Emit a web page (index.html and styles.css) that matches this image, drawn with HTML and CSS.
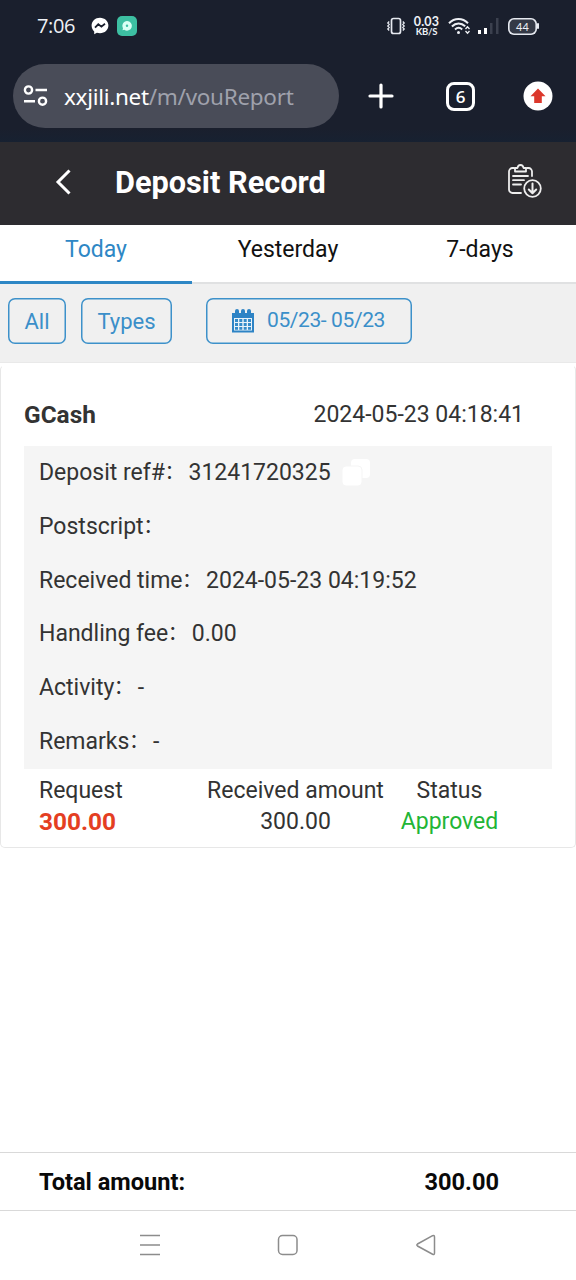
FILE: index.html
```html
<!DOCTYPE html>
<html lang="en">
<head>
<meta charset="utf-8">
<meta name="viewport" content="width=device-width, initial-scale=1">
<title>Deposit Record</title>
<link rel="stylesheet" href="styles.css">
</head>
<body>
<div class="screen">
  <div class="status-bar">
    <span class="clock">7:06</span>
    <svg class="messenger" width="18" height="18" viewBox="0 0 18 18"><path d="M9 .7C4.2.7.6 4.100.6 8.600c0 2.400 1 4.400 2.600 5.800v2.900l2.700-1.500c1 .3 2 .5 3.100.5 4.800 0 8.400-3.400 8.400-7.700S13.800.7 9 .7z" fill="#fff"/><path d="M4 10.700 7.300 7.300l3.100 2.400L14 6.700" fill="none" stroke="#1a1f2d" stroke-width="1.800"/></svg>
    <svg class="chat-app" width="20" height="20" viewBox="0 0 20 20"><rect width="20" height="20" rx="5" fill="#3dbfa2"/><path d="M10 5a4.800 4.800 0 1 1-2.700 8.700l-1.800.5.500-2A4.800 4.800 0 0 1 10 5z" fill="#d9fff5"/><circle cx="10" cy="9.800" r="1.200" fill="#3dbfa2"/></svg>
    <div class="status-icons">
      <svg width="20" height="18" viewBox="0 0 20 18" fill="none" stroke="#e6e9f0"><rect x="5.500" y="1.500" width="9" height="15" rx="2" stroke-width="1.700"/><path d="M3.200 4.500 1.800 6l1.400 1.500L1.800 9l1.400 1.500-1.400 1.500 1.400 1.500M16.800 4.500 18.200 6l-1.400 1.500L18.200 9l-1.400 1.500 1.400 1.500-1.400 1.500" stroke-width="1.300"/></svg>
      <div class="speed"><span class="speed-value">0.03</span><span class="speed-unit">KB/S</span></div>
      <svg class="wifi" width="23" height="18" viewBox="0 0 23 18" fill="none" stroke="#eef0f5" stroke-width="2"><path d="M1 6.200c5.600-5.600 13.400-5.600 19 0M3.900 9.500c4-4 9.300-4 13.300-.2M7 12.500c2.200-2.100 5-2.100 7.200 0"/><circle cx="10.500" cy="15.600" r="1.500" fill="#eef0f5" stroke="none"/><path d="m17.500 12 2-2.300 2 2.300M17.500 14l2 2.300 2-2.300" stroke-width="1.300"/></svg>
      <svg class="signal" width="22" height="18" viewBox="0 0 22 18"><path d="M1 13h3v4H1zM7 11h3v6H7z" fill="#fff"/><path d="M13 6h2.500v11H13zM19 1h2.500v16H19z" fill="#3b404e"/></svg>
      <div class="battery">44</div>
    </div>
  </div>

  <div class="browser-bar">
    <div class="address">
      <svg width="25" height="22" viewBox="0 0 25 22" fill="none" stroke="#fff" stroke-width="2.400"><circle cx="5.500" cy="5" r="3.600"/><path d="M12.500 5H24M1 16.200h11"/><circle cx="19.500" cy="16.200" r="3.600"/></svg>
      <span class="url">xxjili.net<span class="path">/m/vouReport</span></span>
    </div>
    <svg class="new-tab" width="26" height="26" viewBox="0 0 26 26" stroke="#fff" stroke-width="3.200" stroke-linecap="round"><path d="M13 2v22M2 13h22"/></svg>
    <div class="tab-count">6</div>
    <svg class="update" width="30" height="30" viewBox="0 0 30 30"><circle cx="15" cy="15" r="14.500" fill="#fff"/><path d="m15 7.500 7.500 7.800h-3.700V22h-7.600v-6.700H7.500z" fill="#dc382c"/></svg>
  </div>

  <header class="page-header">
    <svg class="back" width="18" height="28" viewBox="0 0 18 28" fill="none" stroke="#fff" stroke-width="3"><path d="M16.500 2.500 5 14l11.500 11.500"/></svg>
    <h1>Deposit Record</h1>
    <svg class="records" width="36" height="36" viewBox="0 0 36 36" fill="none" stroke="#eee" stroke-width="1.800" stroke-linecap="round" stroke-linejoin="round"><path d="M7 4H5.500A3.500 3.500 0 0 0 2 7.500v18A3.500 3.500 0 0 0 5.500 29H14M20 4h1.500A3.500 3.500 0 0 1 25 7.500V12M8 7.500V4h2.500c.5-4 5.500-4 6 0H19v3.500zM6 12h15M6 16.200h11M6 20.500h8"/><circle cx="25.500" cy="24.500" r="8.300"/><path d="M25.500 19.500v9.500M21.800 25.500l3.700 3.700 3.700-3.700" stroke-width="2"/></svg>
  </header>

  <nav class="tabs">
    <div class="tab active">Today</div>
    <div class="tab">Yesterday</div>
    <div class="tab">7-days</div>
  </nav>

  <div class="filters">
    <div class="chip all">All</div>
    <div class="chip types">Types</div>
    <div class="chip dates">
      <svg width="22" height="24" viewBox="0 0 22 24"><path d="M0 4h3V2a2 2 0 0 1 4 0v2h2V2a2 2 0 0 1 4 0v2h2V2a2 2 0 0 1 4 0v2h3v19.500H0z" fill="#2d83c5"/><path d="M2 9h18v12.500H2z" fill="#e8f2f9"/><path d="M3 10h3v3H3zm4.300 0h3v3h-3zm4.400 0h3v3h-3zm4.300 0h3v3h-3zM3 14h3v3H3zm4.300 0h3v3h-3zm4.400 0h3v3h-3zm4.300 0h3v3h-3zM3 18h3v2.700H3zm4.300 0h3v2.700h-3zm4.400 0h3v2.700h-3zm4.300 0h3v2.700h-3z" fill="#348bc9"/></svg>
      <span>05/23- 05/23</span>
    </div>
  </div>

  <main class="content">
    <article class="card">
      <div class="card-head"><strong>GCash</strong><time>2024-05-23 04:18:41</time></div>
      <div class="details">
        <div class="row"><span>Deposit ref#</span><span class="colon">：</span><span>31241720325</span><svg class="copy" width="30" height="30" viewBox="0 0 30 30" fill="#fff"><rect x="10" y="1" width="19" height="19" rx="4"/><rect x="1" y="8" width="20" height="20" rx="4" stroke="#f5f5f5"/></svg></div>
        <div class="row"><span>Postscript</span><span class="colon">：</span></div>
        <div class="row"><span>Received time</span><span class="colon">：</span><span>2024-05-23 04:19:52</span></div>
        <div class="row"><span>Handling fee</span><span class="colon">：</span><span>0.00</span></div>
        <div class="row"><span>Activity</span><span class="colon">：</span><span>-</span></div>
        <div class="row"><span>Remarks</span><span class="colon">：</span><span>-</span></div>
      </div>
      <div class="summary">
        <div class="request"><span>Request</span><b>300.00</b></div>
        <div class="received"><span>Received amount</span><span>300.00</span></div>
        <div class="state"><span>Status</span><span class="approved">Approved</span></div>
      </div>
    </article>
  </main>

  <footer class="total"><span>Total amount:</span><span>300.00</span></footer>

  <div class="system-nav">
    <svg width="22" height="22" viewBox="0 0 22 22"><path d="M1 1.500h20M1 11h20M1 20.500h20"/></svg>
    <svg width="22" height="22" viewBox="0 0 22 22"><rect x="1.500" y="1.500" width="18.500" height="19" rx="4"/></svg>
    <svg width="22" height="22" viewBox="0 0 22 22"><path d="M17.600 1.700 2.500 10q-1.300 1 0 2l15.100 8.200q1.900.8 1.900-1.200V3q0-2-1.900-1.300z"/></svg>
  </div>
</div>
</body>
</html>
```
FILE: styles.css
```css
* { box-sizing: border-box; }

body {
  margin: 0;
  background: #fff;
  color: #333;
  font-family: Roboto, "Noto Sans CJK SC", sans-serif;
  font-size: 23px;
}

svg { display: block; flex: none; }

.screen {
  width: 576px;
  height: 1280px;
  display: flex;
  flex-direction: column;
  overflow: hidden;
}

.screen > * { flex: none; }

.status-bar {
  height: 52px;
  padding-left: 37px;
  display: flex;
  align-items: center;
  background: #1a1f2d;
  color: #eef1f6;
}

.clock {
  width: 54px;
  font: 20px/24px "Open Sans", sans-serif;
  letter-spacing: -0.4px;
}

.chat-app { margin-left: 8px; }

.status-icons {
  margin-left: auto;
  padding-right: 37px;
  display: flex;
  align-items: center;
}

.speed {
  width: 27px;
  margin-left: 7px;
  display: flex;
  flex-direction: column;
  align-items: center;
  font-family: Lato, sans-serif;
  font-weight: 700;
  white-space: nowrap;
}

.speed-value { font-size: 12.5px; line-height: 11px; letter-spacing: 0.2px; }
.speed-unit { font-size: 9.500px; line-height: 10px; letter-spacing: -0.2px; }
.wifi { margin-left: 8px; }
.signal { margin-left: 6px; }

.battery {
  position: relative;
  width: 29px;
  height: 17px;
  margin-left: 9px;
  margin-right: 2px;
  border-radius: 6px;
  box-shadow: inset 0 0 0 1.6px #e6e9f0;
  background: #343946;
  font: 11px/17px Lato, sans-serif;
  text-align: center;
}

.battery::after {
  content: "";
  position: absolute;
  right: -2px;
  top: 5px;
  width: 2px;
  height: 6px;
  border-radius: 1px;
  background: #e6e9f0;
}

.browser-bar {
  height: 90px;
  padding: 12px 23px 14px 13px;
  display: flex;
  align-items: center;
  background: linear-gradient(#1a1f2d 85%, #172131);
}

.address {
  width: 326px;
  height: 64px;
  padding-left: 10px;
  display: flex;
  align-items: center;
  gap: 16px;
  border-radius: 32px;
  background: #494c58;
}

.url {
  padding-top: 1px;
  color: #fff;
  font: 22.500px/32px "Noto Sans", sans-serif;
  letter-spacing: -0.300px;
  white-space: nowrap;
}

.path { color: #9fa1ac; }
.new-tab { margin-left: 29px; }

.tab-count {
  width: 29px;
  height: 29px;
  margin-left: 52px;
  border: 3px solid #fff;
  border-radius: 8px;
  color: #fff;
  font: 600 17px/23px "Open Sans", sans-serif;
  text-align: center;
}

.update { margin-left: auto; }

.page-header {
  height: 83px;
  padding: 0 33px 3px 53px;
  display: flex;
  align-items: center;
  background: #2d2c30;
}

h1 {
  margin: 2px 0 0 44px;
  color: #fff;
  font-size: 30.700px;
  font-weight: 700;
  line-height: 40px;
}

.records { margin-left: auto; }

.tabs { height: 59px; display: flex; }

.tab {
  flex: 1;
  border-bottom: 2px solid #e0e1e2;
  color: #111;
  line-height: 50px;
  text-align: center;
}

.tab.active { border-bottom: 4px solid #2e87c5; color: #2e87c5; height: 60px; }

.filters {
  height: 79px;
  padding: 14px 8px;
  display: flex;
  align-items: flex-start;
  background: #f0f0f0;
  border-bottom: 1px solid #e9e9e9;
}

.chip {
  height: 46px;
  border-radius: 7px;
  box-shadow: inset 0 0 0 1.500px #3d91ca;
  color: #3b8fc9;
  line-height: 48px;
  text-align: center;
}

.all { width: 58px; font-size: 22px; }
.types { width: 91px; margin-left: 15px; font-size: 22px; }

.dates {
  width: 206px;
  margin-left: 34px;
  padding-left: 26px;
  display: flex;
  align-items: center;
  gap: 13px;
  font-size: 21px;
  letter-spacing: -0.400px;
  line-height: 42px;
}

.dates span { padding-bottom: 2px; white-space: nowrap; }

.content { height: 789px; padding-top: 2px; }

.card {
  height: 483px;
  padding: 0 23px;
  border: 1px solid #e7e7e7;
  border-top-color: transparent;
  border-radius: 5px;
}

.card-head {
  height: 80px;
  padding: 16px 28px 0 0;
  display: flex;
  justify-content: space-between;
  align-items: center;
}

.card-head strong { font-size: 24.400px; }

.details {
  height: 323px;
  padding-left: 15px;
  background: #f5f5f5;
}

.row {
  height: 53.7px;
  display: flex;
  align-items: center;
  line-height: 53px;
  white-space: pre;
}

.row > span { height: 53px; }

.colon {
  width: 23px;
  margin: 0 1px 0 -0.500px;
  font-family: "Noto Sans CJK SC", sans-serif;
  font-size: 20px;
  line-height: 50px;
}

.copy { margin-left: 10px; }

.summary {
  padding: 6px 15px 0;
  display: grid;
  grid-template-columns: 168px 177px 1fr;
  line-height: 31px;
  white-space: nowrap;
}

.summary > div { display: flex; flex-direction: column; align-items: center; }
.summary .request { align-items: flex-start; }
.summary .state { width: 131px; }
.request b { color: #e43e22; font-size: 24.400px; }
.approved { color: #22b535; }

.total {
  height: 59px;
  padding: 0 77px 0 39px;
  display: flex;
  align-items: center;
  justify-content: space-between;
  border-top: 1px solid #d9d9d9;
  border-bottom: 1px solid #d9d9d9;
  color: #090909;
  font-size: 23.600px;
  font-weight: 700;
}

.system-nav {
  height: 69px;
  padding: 0 139px 2px;
  display: flex;
  align-items: center;
  justify-content: space-between;
  fill: none;
  stroke: #8c8c8c;
  stroke-width: 1.500;
}
```
